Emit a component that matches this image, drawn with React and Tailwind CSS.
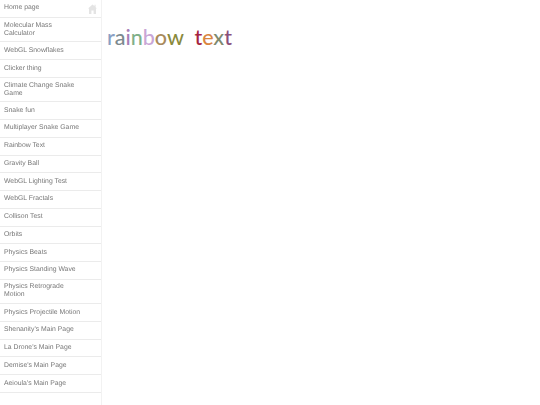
import React from 'react';

const links = [
  'Molecular Mass Calculator',
  'WebGL Snowflakes',
  'Clicker thing',
  'Climate Change Snake Game',
  'Snake fun',
  'Multiplayer Snake Game',
  'Rainbow Text',
  'Gravity Ball',
  'WebGL Lighting Test',
  'WebGL Fractals',
  'Collison Test',
  'Orbits',
  'Physics Beats',
  'Physics Standing Wave',
  'Physics Retrograde Motion',
  'Physics Projectile Motion',
  "Shenanity's Main Page",
  "La Drone's Main Page",
  "Demise's Main Page",
  "Aeioula's Main Page",
];

const rainbow = [
  ['r', 'text-[#8a9fc4]'],
  ['a', 'text-[#7d8a8f]'],
  ['i', 'text-[#a77fb8]'],
  ['n', 'text-[#7fb08a]'],
  ['b', 'text-[#c9a6d6]'],
  ['o', 'text-[#a98a5c]'],
  ['w', 'text-[#8a8a3c]'],
  [' ', ''],
  ['t', 'text-[#a5243f]'],
  ['e', 'text-[#d9853f]'],
  ['x', 'text-[#7f8a6f]'],
  ['t', 'text-[#8a4f7a]'],
];

const Row = ({ children }) => (
  <div className="flex min-h-[17.75px] items-center border-b border-[#ebebeb] pl-1 pr-[19px] py-[3.7px] text-[6.85px] leading-[8px] text-[#777] [text-rendering:geometricPrecision]">
    <span>{children}</span>
  </div>
);

const App = () => {
  return (
    <div className="flex min-h-[405px] bg-white font-['Liberation_Sans',sans-serif]">
      <nav className="w-[102px] h-[405px] shrink-0 border-r border-[#f2f2f2] [will-change:transform]">
        <div className="flex items-center justify-between border-b border-[#ebebeb] pl-1 pr-1 h-[18px] text-[6.85px] text-[#777] [text-rendering:geometricPrecision]">
          <span>Home page</span>
          <svg width="9" height="10" viewBox="0 0 9 10" fill="#e4e4e4">
            <path d="M4.5 0.5 L6.5 2.3 L6.5 0.8 L7.6 0.8 L7.6 3.3 L9 4.6 L8 4.6 L8 10 L5.6 10 L5.6 6.5 L3.4 6.5 L3.4 10 L1 10 L1 4.6 L0 4.6 Z" />
          </svg>
        </div>
        {links.map((name) => (
          <Row key={name}>{name}</Row>
        ))}
      </nav>
      <main className="flex-1 pl-[5px] pt-[22px]">
        <h1 className="whitespace-pre text-[21.5px] font-medium leading-[30px] [word-spacing:5.5px] font-['Lato',sans-serif]">
          {rainbow.map(([ch, color], i) => (
            <span key={i} className={color}>{ch}</span>
          ))}
        </h1>
      </main>
    </div>
  );
};

export default App;
